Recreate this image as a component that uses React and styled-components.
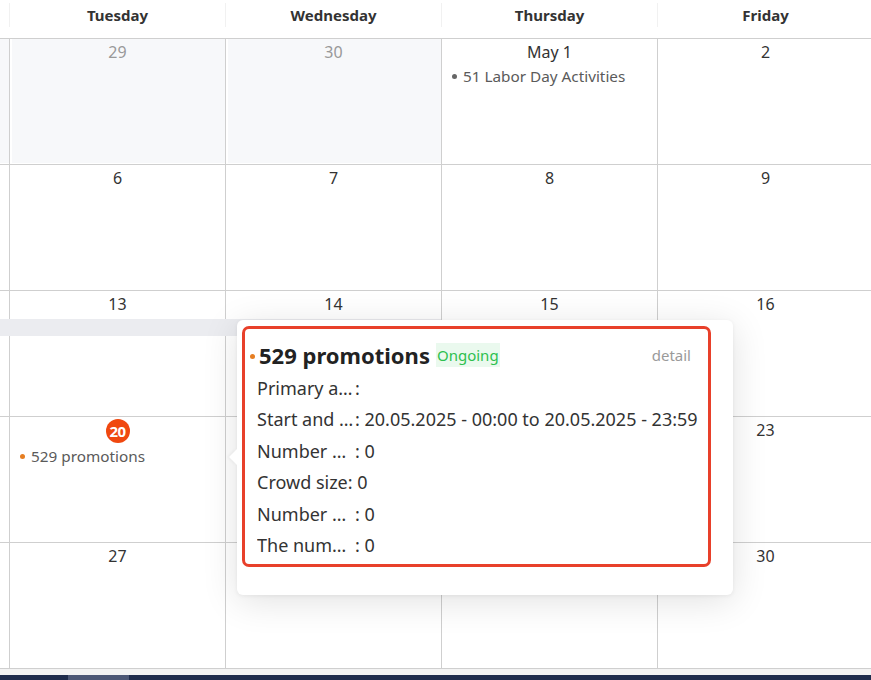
import React from "react";
import styled, { createGlobalStyle } from "styled-components";

const GlobalStyle = createGlobalStyle`
  html, body { margin: 0; padding: 0; background: #fff; }
  body { font-family: "Noto Sans", "Open Sans", "Liberation Sans", sans-serif; color: #333; overflow: hidden; }
  * { box-sizing: border-box; }
`;

const COL = 216;
const LINE = "#cfcfcf";

const Page = styled.div`
  position: relative;
  width: 871px;
  height: 680px;
  overflow: hidden;
  display: flex;
  flex-direction: column;
  background: #fff;
`;

const Viewport = styled.div`
  flex: 1;
  overflow: hidden;
`;

const Board = styled.div`
  width: ${COL * 7}px;
  margin-left: -207px;
`;

const HeaderRow = styled.div`
  display: grid;
  grid-template-columns: repeat(7, ${COL}px);
  height: 39px;
  border-bottom: 1px solid ${LINE};
`;

const HeaderCell = styled.div`
  margin: 3px 0 11px;
  height: 24px;
  line-height: 24px;
  border-left: 1px solid #f1f1f1;
  text-align: center;
  font-size: 15px;
  font-weight: 700;
  color: #333;
`;

const WeekRow = styled.div`
  display: grid;
  grid-template-columns: repeat(7, ${COL}px);
  grid-template-rows: 28px 17px 1fr;
  height: 126px;
  border-bottom: 1px solid ${LINE};
`;

const Cell = styled.div`
  grid-row: 1 / -1;
  grid-column: ${(p) => p.$col};
  border-left: 1px solid ${LINE};
  background: ${(p) => (p.$other ? "#f7f8fa" : "#fff")};
  box-shadow: ${(p) => (p.$other ? "inset 2px 0 0 #fff, inset 0 -1px 0 #fff" : "none")};
  display: flex;
  flex-direction: column;
  padding: 0 10px;
`;

const DayNum = styled.div`
  height: 26px;
  line-height: 26px;
  text-align: center;
  font-size: 16px;
  color: ${(p) => (p.$other ? "#999" : "#333")};
  display: flex;
  justify-content: center;
  align-items: center;
`;

const Today = styled.span`
  width: 24px;
  height: 24px;
  border-radius: 50%;
  background: #f0480f;
  color: #fff;
  font-weight: 700;
  font-size: 15px;
  line-height: 24px;
  text-align: center;
  letter-spacing: -0.5px;
  margin-top: 2px;
`;

const EventItem = styled.div`
  display: flex;
  align-items: center;
  gap: 6px;
  height: 22px;
  margin-top: ${(p) => (p.$today ? "2px" : "0")};
  font-size: 15.3px;
  color: #5a5a5a;
  white-space: nowrap;
  &::before {
    content: "";
    width: 5px;
    height: 5px;
    border-radius: 50%;
    background: ${(p) => p.$dot};
    flex: none;
  }
`;

const Band = styled.div`
  grid-row: 2;
  grid-column: ${(p) => p.$span};
  background: #ebecf0;
  z-index: 1;
`;

const Footer = styled.div`
  height: 11px;
  display: flex;
  flex-direction: column;
`;

const FooterGap = styled.div`
  height: 6px;
  background: #f3f3f3;
`;

const ScrollTrack = styled.div`
  flex: 1;
  background: #1f2c4c;
  display: flex;
`;

const ScrollThumb = styled.div`
  margin-left: 68px;
  width: 61px;
  background: #4c5775;
`;

const Popover = styled.div`
  position: absolute;
  left: 237px;
  top: 320px;
  width: 496px;
  height: 275px;
  background: #fff;
  border-radius: 6px;
  box-shadow: 0 6px 36px rgba(0, 0, 0, 0.12), 0 1px 4px rgba(0, 0, 0, 0.06);
  padding: 6px 22px 0 5px;
  z-index: 5;
  &::before {
    content: "";
    position: absolute;
    left: -8px;
    top: 129px;
    border-top: 8px solid transparent;
    border-bottom: 8px solid transparent;
    border-right: 8px solid #fff;
    filter: drop-shadow(-2px 0 1px rgba(0, 0, 0, 0.04));
  }
`;

const Highlight = styled.div`
  border: 3px solid #e8402a;
  border-radius: 7px;
  height: 241px;
  padding: 8px 0 0 5px;
`;

const TitleRow = styled.div`
  display: flex;
  align-items: center;
  height: 36px;
`;

const Dot = styled.span`
  width: 5px;
  height: 5px;
  border-radius: 50%;
  background: #e67e22;
  margin-right: 4px;
  margin-top: 2px;
`;

const Title = styled.span`
  font-size: 22px;
  font-weight: 700;
  color: #222;
`;

const Tag = styled.span`
  margin-left: 6px;
  height: 24px;
  line-height: 24px;
  padding: 0 1px;
  background: #eaf9ee;
  color: #2ec04f;
  font-size: 15px;
`;

const Detail = styled.span`
  margin-left: auto;
  margin-right: 17px;
  font-size: 15px;
  color: #9a9a9a;
`;

const InfoRow = styled.div`
  display: flex;
  height: 31.4px;
  line-height: 31.4px;
  padding-left: 7px;
  font-size: 18px;
  color: #333;
  white-space: nowrap;
`;

const Label = styled.span`
  max-width: 98px;
  overflow: hidden;
  text-overflow: ellipsis;
`;

const weeks = [
  [
    { d: "28", other: true },
    { d: "29", other: true },
    { d: "30", other: true },
    { d: "May 1", events: [{ t: "51 Labor Day Activities", c: "#666" }] },
    { d: "2" },
    { d: "3" },
    { d: "4" },
  ],
  [{ d: "5" }, { d: "6" }, { d: "7" }, { d: "8" }, { d: "9" }, { d: "10" }, { d: "11" }],
  [{ d: "12" }, { d: "13" }, { d: "14" }, { d: "15" }, { d: "16" }, { d: "17" }, { d: "18" }],
  [
    { d: "19" },
    { d: "20", today: true, events: [{ t: "529 promotions", c: "#e67e22" }] },
    { d: "21" },
    { d: "22" },
    { d: "23" },
    { d: "24" },
    { d: "25" },
  ],
  [{ d: "26" }, { d: "27" }, { d: "28" }, { d: "29" }, { d: "30" }, { d: "31" }, { d: "1", other: true }],
];

const days = ["Monday", "Tuesday", "Wednesday", "Thursday", "Friday", "Saturday", "Sunday"];

const info = [
  ["Primary activity", ""],
  ["Start and end time", "20.05.2025 - 00:00 to 20.05.2025 - 23:59"],
  ["Number of participants", "0"],
  ["Crowd size", "0"],
  ["Number of orders", "0"],
  ["The number of coupons", "0"],
];

export default function App() {
  return (
    <Page>
      <GlobalStyle />
      <Viewport>
        <Board>
          <HeaderRow>
            {days.map((d) => (
              <HeaderCell key={d}>{d}</HeaderCell>
            ))}
          </HeaderRow>
          {weeks.map((w, wi) => (
            <WeekRow key={wi}>
              {w.map((c, ci) => (
                <Cell key={ci} $col={ci + 1} $other={c.other}>
                  <DayNum $other={c.other}>{c.today ? <Today>{c.d}</Today> : c.d}</DayNum>
                  {(c.events || []).map((e) => (
                    <EventItem key={e.t} $dot={e.c} $today={c.today}>
                      {e.t}
                    </EventItem>
                  ))}
                </Cell>
              ))}
              {wi === 2 && <Band $span="1 / 4" />}
            </WeekRow>
          ))}
        </Board>
      </Viewport>
      <Footer>
        <FooterGap />
        <ScrollTrack>
          <ScrollThumb />
        </ScrollTrack>
      </Footer>
      <Popover>
        <Highlight>
          <TitleRow>
            <Dot />
            <Title>529 promotions</Title>
            <Tag>Ongoing</Tag>
            <Detail>detail</Detail>
          </TitleRow>
          {info.map(([k, v]) => (
            <InfoRow key={k}>
              <Label>{k}</Label>
              <span>{v ? `: ${v}` : " :"}</span>
            </InfoRow>
          ))}
        </Highlight>
      </Popover>
    </Page>
  );
}
